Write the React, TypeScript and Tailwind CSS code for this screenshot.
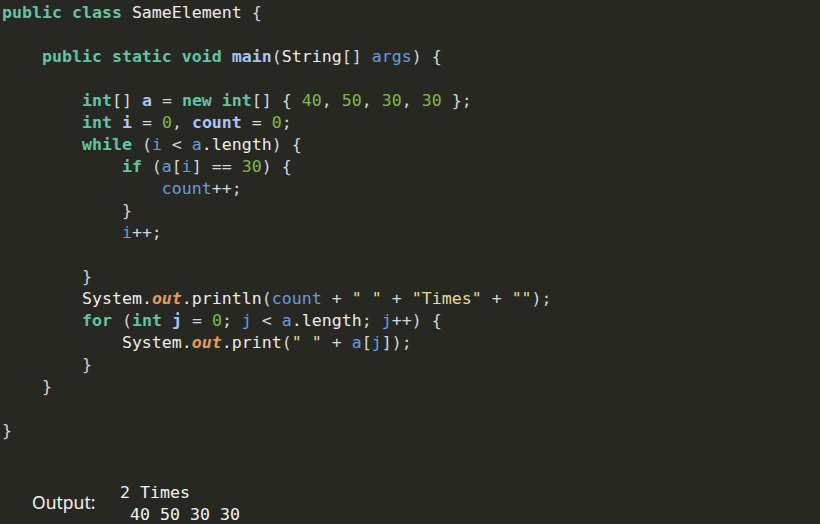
import React, { FC } from "react";

type Tok = [string, string?];

const cls: Record<string, string> = {
  k: "text-[#5cc6a7] font-bold",
  d: "text-[#a6c6f6] font-bold",
  v: "text-[#5f9fe6]",
  n: "text-[#80b946]",
  s: "text-[#e4dc94]",
  f: "text-[#e89a5a] font-bold italic",
  p: "text-[#d6d6d6]",
  t: "text-[#ececec]",
};

const lines: Tok[][] = [
  [["public class", "k"], [" SameElement ", "t"], ["{", "p"]],
  [],
  [["    "], ["public static void", "k"], [" "], ["main", "d"], ["(", "p"], ["String", "t"], ["[] ", "p"], ["args", "v"], [") {", "p"]],
  [],
  [["        "], ["int", "k"], ["[] ", "p"], ["a", "d"], [" = ", "p"], ["new int", "k"], ["[] { ", "p"], ["40", "n"], [", ", "p"], ["50", "n"], [", ", "p"], ["30", "n"], [", ", "p"], ["30", "n"], [" };", "p"]],
  [["        "], ["int", "k"], [" "], ["i", "d"], [" = ", "p"], ["0", "n"], [", ", "p"], ["count", "d"], [" = ", "p"], ["0", "n"], [";", "p"]],
  [["        "], ["while", "k"], [" (", "p"], ["i", "v"], [" < ", "p"], ["a", "v"], [".length", "t"], [") {", "p"]],
  [["            "], ["if", "k"], [" (", "p"], ["a", "v"], ["[", "p"], ["i", "v"], ["] == ", "p"], ["30", "n"], [") {", "p"]],
  [["                "], ["count", "v"], ["++;", "p"]],
  [["            "], ["}", "p"]],
  [["            "], ["i", "v"], ["++;", "p"]],
  [],
  [["        "], ["}", "p"]],
  [["        "], ["System.", "t"], ["out", "f"], [".println", "t"], ["(", "p"], ["count", "v"], [" + ", "p"], ['" "', "s"], [" + ", "p"], ['"Times"', "s"], [" + ", "p"], ['""', "s"], [");", "p"]],
  [["        "], ["for", "k"], [" (", "p"], ["int", "k"], [" "], ["j", "d"], [" = ", "p"], ["0", "n"], ["; ", "p"], ["j", "v"], [" < ", "p"], ["a", "v"], [".length", "t"], ["; ", "p"], ["j", "v"], ["++) {", "p"]],
  [["            "], ["System.", "t"], ["out", "f"], [".print", "t"], ["(", "p"], ['" "', "s"], [" + ", "p"], ["a", "v"], ["[", "p"], ["j", "v"], ["]);", "p"]],
  [["        "], ["}", "p"]],
  [["    "], ["}", "p"]],
  [],
  [["}", "p"]],
];

const CodeLine: FC<{ toks: Tok[] }> = ({ toks }) => (
  <div className="h-[22px] leading-[22px] whitespace-pre">
    {toks.length === 0 ? " " : toks.map((t, i) => (
      <span key={i} className={t[1] ? cls[t[1]] : ""}>{t[0]}</span>
    ))}
  </div>
);

export default function App() {
  return (
    <div className="w-[820px] h-[524px] bg-[#272822] overflow-hidden flex flex-col">
      <div className="pl-[2px] pt-[2px] text-[16.6px] text-[#ececec] font-['DejaVu_Sans_Mono',monospace]">
        {lines.map((l, i) => <CodeLine key={i} toks={l} />)}
      </div>
      <div className="flex items-center mt-[40px]">
        <div className="pl-[32px] w-[120px] text-[17.5px] text-[#f2f2f2] font-['Noto_Sans',sans-serif] leading-[22px] pb-[4px]">
          Output:
        </div>
        <div className="text-[16.6px] text-[#f2f2f2] font-['DejaVu_Sans_Mono',monospace] whitespace-pre leading-[22px]">
          <div>2 Times</div>
          <div> 40 50 30 30</div>
        </div>
      </div>
    </div>
  );
}
